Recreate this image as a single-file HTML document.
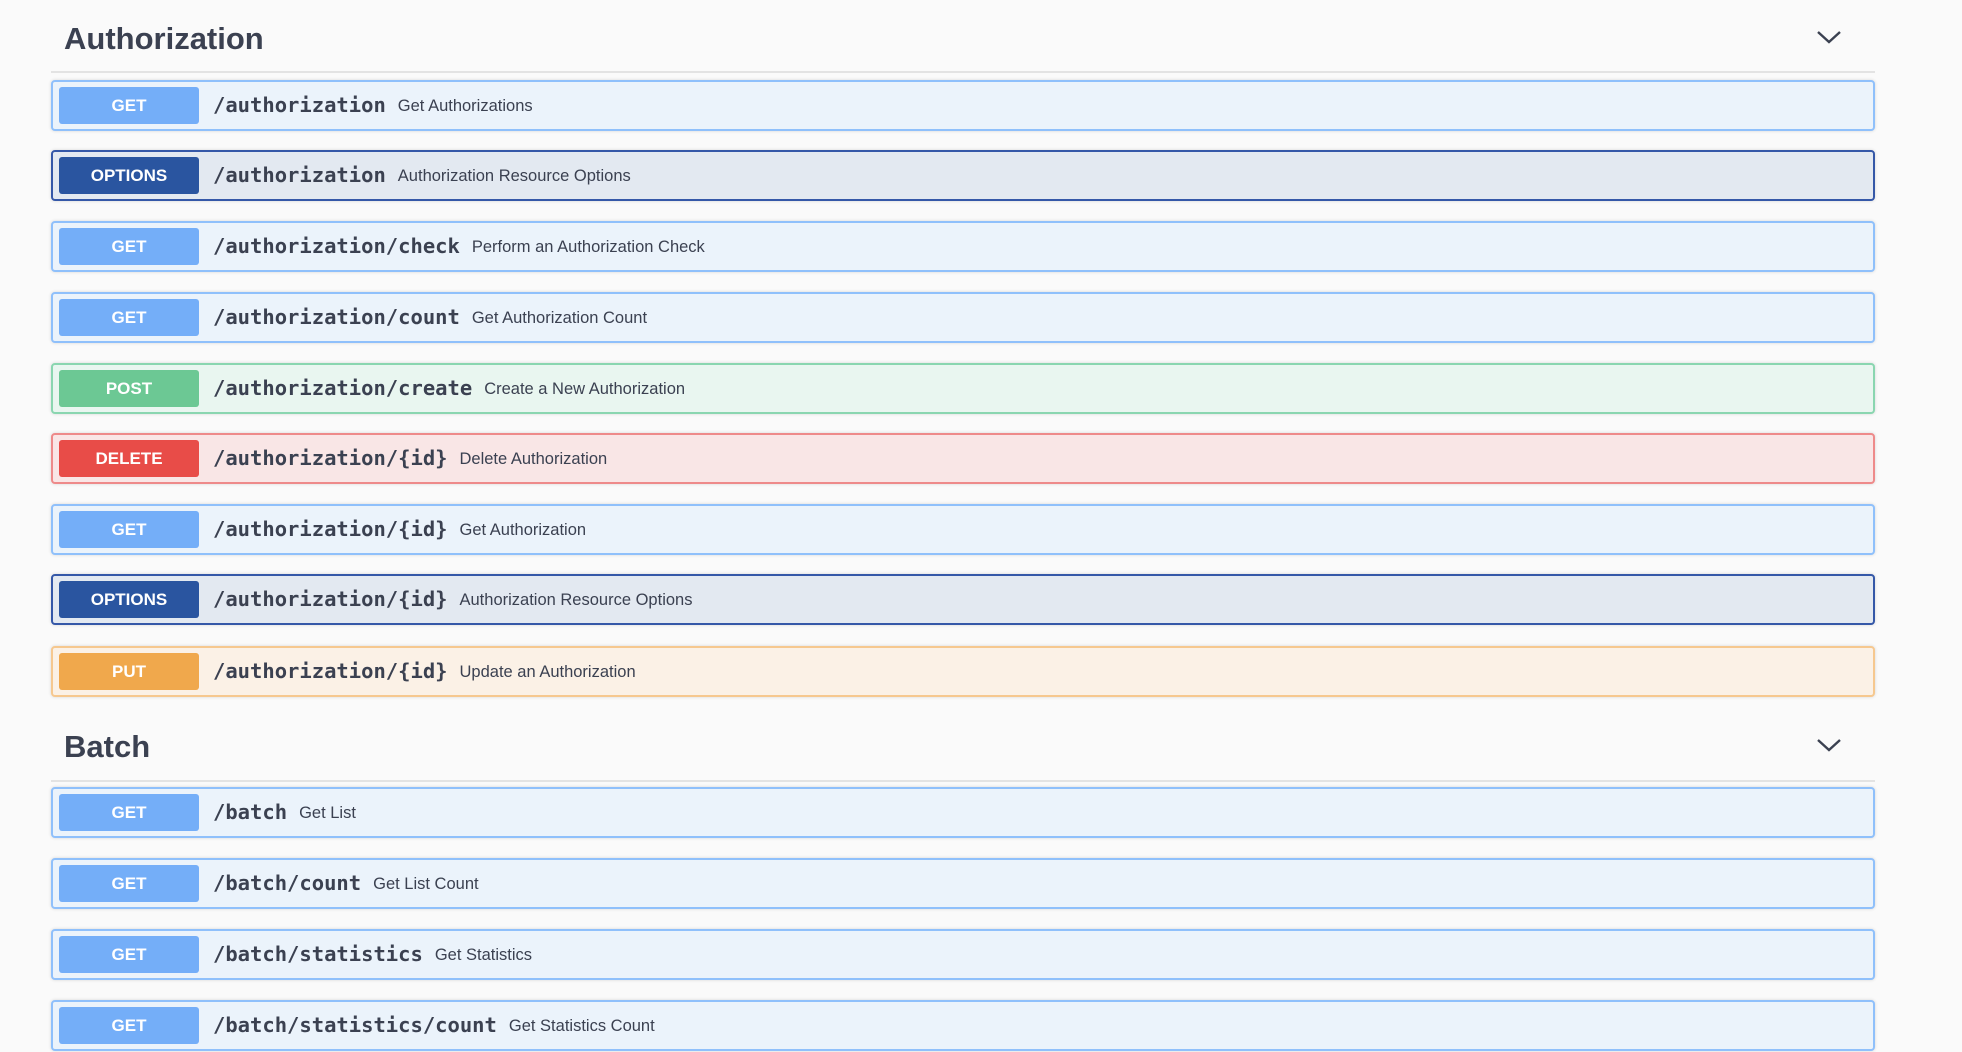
<!DOCTYPE html>
<html><head><meta charset="utf-8"><style>
*{box-sizing:border-box;margin:0;padding:0}
body{width:1962px;height:1052px;background:#fafafa;font-family:"Liberation Sans",Arial,sans-serif;position:relative;overflow:hidden;color:#3b4151}
.h{position:absolute;left:64px;font-size:31px;font-weight:bold;color:#3b4151;line-height:40px}
.div{position:absolute;left:51px;width:1824px;height:2px;background:#e3e3e3}
.chev{position:absolute;left:1816px;width:26px;height:16px}
.row{position:absolute;left:51px;width:1824px;height:51px;border:2px solid;border-radius:4px;box-shadow:0 0 3px rgba(0,0,0,.15)}
.b{position:absolute;left:6px;top:5px;width:140px;height:37px;border-radius:3px;color:#fff;font-weight:bold;font-size:17px;text-align:center;line-height:37px}
.p{position:absolute;left:160px;top:0;line-height:47px;font-family:"DejaVu Sans Mono","Liberation Mono",monospace;font-weight:bold;font-size:20.5px;color:#3b4151;white-space:nowrap}
.p span{font-family:"Liberation Sans",Arial,sans-serif;font-weight:normal;font-size:16.5px;margin-left:12px;color:#3b4151;position:relative;top:-1px}
.get{background:#ebf3fb;border-color:#8fc0fb}.get .b{background:#74aef8}
.opt{background:#e3e9f1;border-color:#3558a8}.opt .b{background:#2a55a0}
.post{background:#e9f6f0;border-color:#8ad6b0}.post .b{background:#6cc894}
.del{background:#f9e6e6;border-color:#ee8a8a}.del .b{background:#e84c48}
.put{background:#fbf1e6;border-color:#f6c88f}.put .b{background:#f0a84c}
</style></head><body>
<div class="h" style="top:19px">Authorization</div>
<svg class="chev" style="top:29px" viewBox="0 0 26 16"><path d="M2 3 L13 13 L24 3" fill="none" stroke="#3b4151" stroke-width="2.4"/></svg>
<div class="div" style="top:71px"></div>

<div class="row get" style="top:80px"><div class="b">GET</div><div class="p">/authorization<span>Get Authorizations</span></div></div>
<div class="row opt" style="top:150px"><div class="b">OPTIONS</div><div class="p">/authorization<span>Authorization Resource Options</span></div></div>
<div class="row get" style="top:221px"><div class="b">GET</div><div class="p">/authorization/check<span>Perform an Authorization Check</span></div></div>
<div class="row get" style="top:292px"><div class="b">GET</div><div class="p">/authorization/count<span>Get Authorization Count</span></div></div>
<div class="row post" style="top:363px"><div class="b">POST</div><div class="p">/authorization/create<span>Create a New Authorization</span></div></div>
<div class="row del" style="top:433px"><div class="b">DELETE</div><div class="p">/authorization/{id}<span>Delete Authorization</span></div></div>
<div class="row get" style="top:504px"><div class="b">GET</div><div class="p">/authorization/{id}<span>Get Authorization</span></div></div>
<div class="row opt" style="top:574px"><div class="b">OPTIONS</div><div class="p">/authorization/{id}<span>Authorization Resource Options</span></div></div>
<div class="row put" style="top:646px"><div class="b">PUT</div><div class="p">/authorization/{id}<span>Update an Authorization</span></div></div>

<div class="h" style="top:727px">Batch</div>
<svg class="chev" style="top:737px" viewBox="0 0 26 16"><path d="M2 3 L13 13 L24 3" fill="none" stroke="#3b4151" stroke-width="2.4"/></svg>
<div class="div" style="top:780px"></div>

<div class="row get" style="top:787px"><div class="b">GET</div><div class="p">/batch<span>Get List</span></div></div>
<div class="row get" style="top:858px"><div class="b">GET</div><div class="p">/batch/count<span>Get List Count</span></div></div>
<div class="row get" style="top:929px"><div class="b">GET</div><div class="p">/batch/statistics<span>Get Statistics</span></div></div>
<div class="row get" style="top:1000px"><div class="b">GET</div><div class="p">/batch/statistics/count<span>Get Statistics Count</span></div></div>
</body></html>
